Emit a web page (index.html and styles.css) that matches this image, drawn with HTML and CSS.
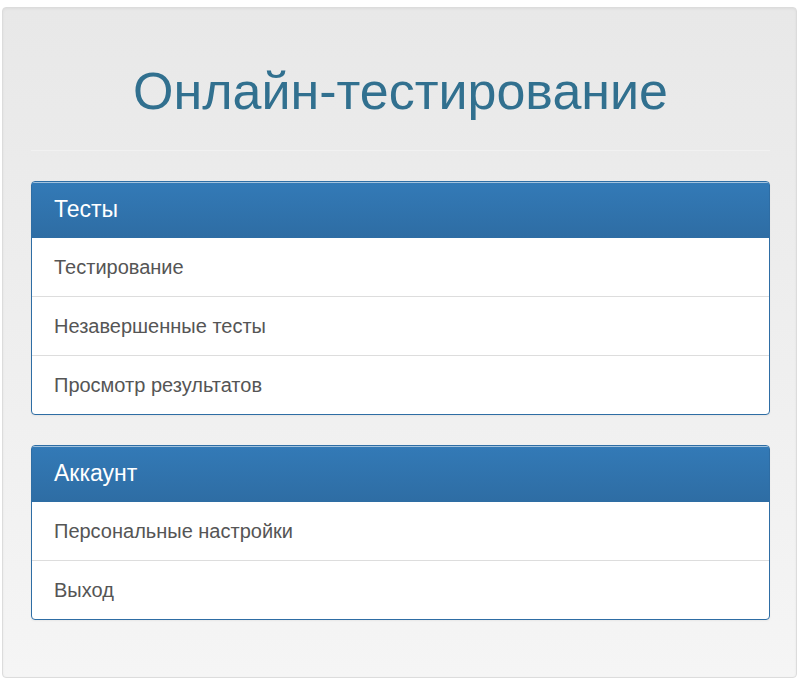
FILE: index.html
```html
<!DOCTYPE html>
<html lang="ru">
<head>
<meta charset="utf-8">
<title>Онлайн-тестирование</title>
<link rel="stylesheet" href="styles.css">
</head>
<body>
<div class="well">
  <h1 class="title">Онлайн-тестирование</h1>
  <hr class="divider">
  <div class="panel">
    <div class="panel-heading">Тесты</div>
    <div class="list">
      <a class="item" href="#">Тестирование</a>
      <a class="item" href="#">Незавершенные тесты</a>
      <a class="item" href="#">Просмотр результатов</a>
    </div>
  </div>
  <div class="panel">
    <div class="panel-heading">Аккаунт</div>
    <div class="list">
      <a class="item" href="#">Персональные настройки</a>
      <a class="item" href="#">Выход</a>
    </div>
  </div>
</div>
</body>
</html>
```

FILE: styles.css
```css
html, body {
  margin: 0;
  padding: 0;
  background: #ffffff;
}
body {
  font-family: "Liberation Sans", Arial, sans-serif;
  padding: 7px 2px 4px 2px;
}
.well {
  border: 1px solid #dcdcdc;
  border-radius: 4px;
  background-color: #f5f5f5;
  background-image: linear-gradient(to bottom, #e8e8e8 0, #f5f5f5 100%);
  box-shadow: inset 0 1px 3px rgba(0,0,0,.05), 0 1px 0 rgba(255,255,255,.1);
  padding: 28px 26px 27px 28px;
}
.title {
  margin: 27px 0 0 0;
  font-size: 52px;
  line-height: 1.1;
  font-weight: normal;
  color: #31708f;
  text-align: center;
}
.divider {
  margin: 30px 0 30px 0;
  border: 0;
  border-top: 1px solid #f1f1f1;
  height: 0;
}
.panel {
  background: #fff;
  border: 1px solid #2e6da4;
  border-radius: 4px;
  box-shadow: 0 1px 2px rgba(0,0,0,.05);
  margin-bottom: 30px;
  overflow: hidden;
}
.panel-heading {
  background-color: #337ab7;
  background-image: linear-gradient(to bottom, #337ab7 0, #2e6da4 100%);
  box-shadow: inset 0 1px 0 rgba(255,255,255,.55);
  color: #fff;
  font-size: 23px;
  line-height: 25px;
  padding: 15px 22px;
}
.list {
  display: flex;
  flex-direction: column;
}
.item {
  display: block;
  color: #555;
  text-decoration: none;
  font-size: 20px;
  line-height: 26px;
  padding: 16px 22px;
  border-top: 1px solid #dddddd;
}
.list .item:first-child {
  border-top-color: #2e6da4;
}
```
